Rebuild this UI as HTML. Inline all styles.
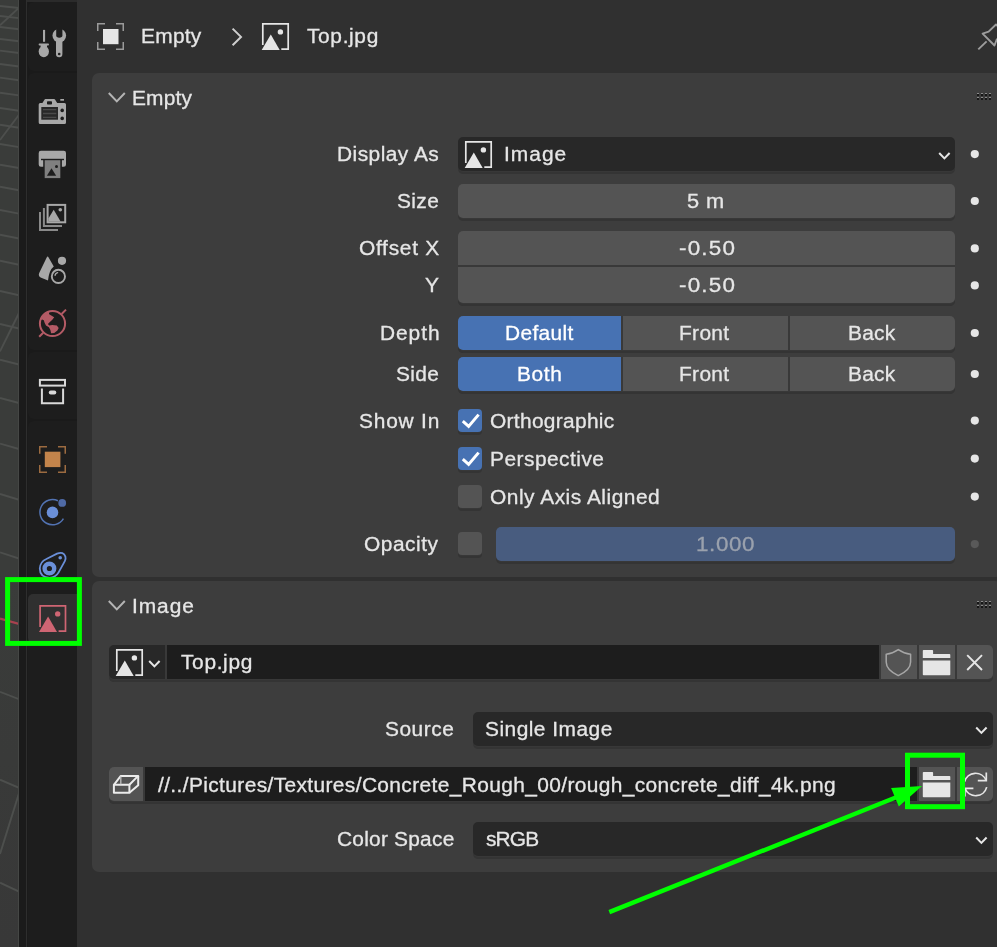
<!DOCTYPE html>
<html lang="en">
<head>
<meta charset="utf-8">
<title>Blender Properties - Image Empty</title>
<style>
*{box-sizing:border-box;margin:0;padding:0}
html,body{width:997px;height:947px;overflow:hidden;background:#303030}
body{position:relative;font-family:"Liberation Sans",sans-serif;font-size:20px;color:#e6e6e6;line-height:24px}
.abs{position:absolute}
.t{position:absolute;white-space:nowrap;height:24px;line-height:24px;will-change:transform;transform-origin:0 50%;-webkit-text-stroke:0.3px currentColor}
.panel{position:absolute;left:92px;width:910px;background:#3d3d3d;border-radius:7px}
.fld{position:absolute;height:34px;border-radius:5px;box-shadow:0 1px 0 #383838,0 3px 0 #343434}
.rsh{position:absolute;height:34px;border-radius:5px;background:#393939;box-shadow:0 1px 0 #383838,0 3px 0 #343434}
.num{background:#545454}
.menu{background:#282828}
.txt{background:#1d1d1d}
.sel{background:#4772b3}
.cb{position:absolute;left:458px;width:24px;height:23px;border-radius:4px;background:#545454;box-shadow:0 1px 0 #383838,0 3px 0 #343434}
.cb.on{background:#4772b3}
svg{position:absolute;overflow:visible}
.grp{left:28px;width:49px;background:#1d1d1d;border-radius:6px 0 0 6px}
</style>
</head>
<body>

<!-- viewport strip -->
<div class="abs" id="vp" style="left:0;top:0;width:19px;height:947px;background:linear-gradient(#3a3c3a,#3a3c3a 60%,#383838)"></div>
<svg width="19" height="947" style="left:0;top:0;overflow:hidden" stroke="#4d4f4d" stroke-width="1.9" fill="none">
<line x1="0" y1="6.0" x2="19" y2="8.0"/><line x1="0" y1="16.0" x2="19" y2="18.1"/><line x1="0" y1="27.0" x2="19" y2="29.2"/><line x1="0" y1="39.0" x2="19" y2="41.3"/><line x1="0" y1="50.6" x2="19" y2="53.0"/><line x1="0" y1="64.0" x2="19" y2="66.5"/><line x1="0" y1="77.6" x2="19" y2="80.2"/><line x1="0" y1="92.7" x2="19" y2="95.4"/><line x1="0" y1="108.0" x2="19" y2="110.8"/><line x1="0" y1="124.8" x2="19" y2="127.8"/><line x1="0" y1="144.0" x2="19" y2="147.1"/><line x1="0" y1="164.7" x2="19" y2="168.0"/><line x1="0" y1="186.7" x2="19" y2="190.2"/><line x1="0" y1="210.0" x2="19" y2="213.6"/><line x1="0" y1="234.7" x2="19" y2="238.5"/><line x1="0" y1="260.8" x2="19" y2="264.8"/><line x1="0" y1="291.0" x2="19" y2="295.3"/><line x1="0" y1="324.0" x2="19" y2="328.5"/><line x1="0" y1="359.7" x2="19" y2="364.5"/><line x1="0" y1="398.0" x2="19" y2="403.1"/><line x1="0" y1="443.6" x2="19" y2="449.1"/><line x1="0" y1="494.0" x2="19" y2="499.8"/><line x1="0" y1="552.3" x2="19" y2="558.6"/><line x1="0" y1="691.8" x2="19" y2="699.2"/><line x1="0" y1="779.7" x2="19" y2="787.8"/><line x1="0" y1="882.7" x2="19" y2="891.6"/>
<line x1="0" y1="25.3" x2="19" y2="7.6"/><line x1="0" y1="140" x2="19" y2="114.7"/><line x1="0" y1="351.4" x2="19" y2="313"/><line x1="0" y1="854" x2="19" y2="793.3"/>
<line x1="0" y1="618.5" x2="19" y2="624" stroke="#a8414f" stroke-width="2.3"/>
</svg>
<div class="abs" style="left:18px;top:0;width:1px;height:947px;background:#454745"></div>
<div class="abs" style="left:19px;top:0;width:9px;height:947px;background:#1b1b1b"></div>
<div class="abs" style="left:26px;top:0;width:1px;height:947px;background:#2e2e2e"></div>
<!-- tab sidebar -->
<div class="abs" id="side" style="left:28px;top:0;width:49px;height:947px;background:#1a1a1a"></div>
<div class="abs" style="left:27px;top:0;width:50px;height:2px;background:#2b2b2b"></div>
<div class="abs grp" style="top:2px;height:69px"></div>
<div class="abs grp" style="top:73px;height:277px"></div>
<div class="abs grp" style="top:352px;height:67px"></div>
<div class="abs grp" style="top:421px;height:526px;border-radius:6px 0 0 0"></div>
<div class="abs" style="left:28px;top:594px;width:49px;height:49px;background:#303030;border-radius:5px 0 0 5px"></div>

<!-- header -->

<!-- panel Empty -->
<div class="panel" style="top:73px;height:504px"></div>
<div class="rsh" style="left:458px;top:231px;width:497px;height:72px"></div>
<div class="rsh" style="left:458px;top:316px;width:497px"></div>
<div class="rsh" style="left:458px;top:357px;width:497px"></div>

<div class="fld menu" style="left:458px;top:137px;width:497px"></div>

<div class="fld num" style="left:458px;top:184px;width:497px"></div>

<div class="fld num" style="left:458px;top:231px;width:497px;height:34px;border-radius:5px 5px 0 0;box-shadow:none"></div>
<div class="fld num" style="left:458px;top:267px;width:497px;height:36px;border-radius:0 0 5px 5px"></div>

<div class="fld sel" style="left:458px;top:316px;width:163px;border-radius:5px 0 0 5px"></div>
<div class="fld num" style="left:623px;top:316px;width:165px;border-radius:0"></div>
<div class="fld num" style="left:790px;top:316px;width:165px;border-radius:0 5px 5px 0"></div>

<div class="fld sel" style="left:458px;top:357px;width:163px;border-radius:5px 0 0 5px"></div>
<div class="fld num" style="left:623px;top:357px;width:165px;border-radius:0"></div>
<div class="fld num" style="left:790px;top:357px;width:165px;border-radius:0 5px 5px 0"></div>

<div class="cb on" style="top:409px"></div>
<div class="cb on" style="top:447px"></div>
<div class="cb" style="top:485px"></div>

<div class="cb" style="top:532px"></div>
<div class="fld" style="left:496px;top:527px;width:459px;background:#485c7f;color:#8f98a8"></div>

<!-- panel Image -->
<div class="panel" style="top:581px;height:291px"></div>
<div class="rsh" style="left:109px;top:645px;width:884px"></div>
<div class="rsh" style="left:109px;top:767px;width:884px"></div>

<div class="fld num" style="left:109px;top:645px;width:56px;border-radius:5px 0 0 5px;background:#282828"></div>
<div class="fld txt" style="left:167px;top:645px;width:712px;border-radius:0"></div>
<div class="fld num" style="left:881px;top:645px;width:36px;border-radius:0"></div>
<div class="fld num" style="left:919px;top:645px;width:36px;border-radius:0"></div>
<div class="fld num" style="left:957px;top:645px;width:36px;border-radius:0 5px 5px 0"></div>

<div class="fld menu" style="left:473px;top:712px;width:520px"></div>

<div class="fld num" style="left:109px;top:767px;width:34px;border-radius:5px 0 0 5px"></div>
<div class="fld txt" style="left:145px;top:767px;width:772px;border-radius:0"></div>
<div class="fld num" style="left:919px;top:767px;width:36px;border-radius:0"></div>
<div class="fld num" style="left:957px;top:767px;width:36px;border-radius:0 5px 5px 0"></div>

<div class="fld menu" style="left:473px;top:822px;width:520px"></div>

<!-- TEXT-START -->
<div class="t" id="h_empty" style="left:140.76px;top:24px;letter-spacing:0.253px;transform:scaleX(1.045)">Empty</div>
<div class="t" id="h_top" style="left:307.19px;top:24px;letter-spacing:0.615px;transform:scaleX(1.045)">Top.jpg</div>
<div class="t" id="p_empty" style="left:132.02px;top:86px;letter-spacing:0.163px;transform:scaleX(1.045)">Empty</div>
<div class="t" id="l_display" style="left:337.11px;top:142px;letter-spacing:0.442px;transform:scaleX(1.045)">Display As</div>
<div class="t" id="v_image" style="left:503.55px;top:142px;letter-spacing:0.993px;transform:scaleX(1.045)">Image</div>
<div class="t" id="l_size" style="left:397.20px;top:189px;letter-spacing:0.355px;transform:scaleX(1.045)">Size</div>
<div class="t" id="v_size" style="left:687.11px;top:189px;letter-spacing:0.372px;transform:scaleX(1.09)">5 m</div>
<div class="t" id="l_offx" style="left:358.85px;top:236px;letter-spacing:0.684px;transform:scaleX(1.045)">Offset X</div>
<div class="t" id="v_offx" style="left:679.35px;top:236px;letter-spacing:1.084px;transform:scaleX(1.12)">-0.50</div>
<div class="t" id="l_y" style="left:424.65px;top:273px;letter-spacing:0.400px;transform:scaleX(1.045)">Y</div>
<div class="t" id="v_y" style="left:679.35px;top:273px;letter-spacing:1.084px;transform:scaleX(1.12)">-0.50</div>
<div class="t" id="l_depth" style="left:379.81px;top:321px;letter-spacing:0.898px;transform:scaleX(1.045)">Depth</div>
<div class="t" id="v_default" style="left:504.72px;top:321px;letter-spacing:0.328px;transform:scaleX(1.045);color:#ffffff">Default</div>
<div class="t" id="v_front1" style="left:678.82px;top:321px;letter-spacing:0.320px;transform:scaleX(1.045)">Front</div>
<div class="t" id="v_back1" style="left:847.96px;top:321px;letter-spacing:0.202px;transform:scaleX(1.045)">Back</div>
<div class="t" id="l_side" style="left:396.20px;top:362px;letter-spacing:0.313px;transform:scaleX(1.045)">Side</div>
<div class="t" id="v_both" style="left:516.91px;top:362px;letter-spacing:0.588px;transform:scaleX(1.045);color:#ffffff">Both</div>
<div class="t" id="v_front2" style="left:678.82px;top:362px;letter-spacing:0.320px;transform:scaleX(1.045)">Front</div>
<div class="t" id="v_back2" style="left:847.96px;top:362px;letter-spacing:0.202px;transform:scaleX(1.045)">Back</div>
<div class="t" id="l_showin" style="left:358.76px;top:409px;letter-spacing:0.769px;transform:scaleX(1.045)">Show In</div>
<div class="t" id="c_ortho" style="left:490.35px;top:409px;letter-spacing:0.297px;transform:scaleX(1.045)">Orthographic</div>
<div class="t" id="c_persp" style="left:489.91px;top:447px;letter-spacing:0.456px;transform:scaleX(1.045)">Perspective</div>
<div class="t" id="c_axis" style="left:490.35px;top:485px;letter-spacing:0.491px;transform:scaleX(1.045)">Only Axis Aligned</div>
<div class="t" id="l_opacity" style="left:364.25px;top:532px;letter-spacing:0.510px;transform:scaleX(1.045)">Opacity</div>
<div class="t" id="v_opacity" style="left:696.07px;top:532px;letter-spacing:0.550px;transform:scaleX(1.12);color:#9aa1ad">1.000</div>
<div class="t" id="p_image" style="left:131.53px;top:594px;letter-spacing:0.897px;transform:scaleX(1.045)">Image</div>
<div class="t" id="v_top" style="left:180.87px;top:650px;letter-spacing:0.625px;transform:scaleX(1.045)">Top.jpg</div>
<div class="t" id="l_source" style="left:384.75px;top:717px;letter-spacing:0.487px;transform:scaleX(1.045)">Source</div>
<div class="t" id="v_single" style="left:484.92px;top:717px;letter-spacing:0.459px;transform:scaleX(1.045)">Single Image</div>
<div class="t" id="v_path" style="left:158.24px;top:773px;letter-spacing:0.364px;transform:scaleX(1.045)">//../Pictures/Textures/Concrete_Rough_00/rough_concrete_diff_4k.png</div>
<div class="t" id="l_cs" style="left:337.13px;top:827px;letter-spacing:0.216px;transform:scaleX(1.045)">Color Space</div>
<div class="t" id="v_srgb" style="left:486.10px;top:827px;letter-spacing:-0.800px;transform:scaleX(1.045)">sRGB</div>
<!-- TEXT-END -->

<!-- icons -->
<svg id="icons" width="997" height="947" style="left:0;top:0">
<defs>
<symbol id="img" viewBox="0 0 27 27" overflow="visible">
<path d="M0.8 22 V0.8 H26.2 V26.2 H19.3" fill="none" stroke="currentColor" stroke-width="1.7"/>
<path d="M8.8 11.4 L17.7 27 H-0.3 Z" fill="currentColor"/>
<circle cx="18.4" cy="8.9" r="2.7" fill="currentColor"/>
</symbol>
<symbol id="folder" viewBox="0 0 28 26" overflow="visible">
<path d="M0.8 0 H9.5 Q10.3 0 10.3 0.8 V4 H26.7 Q27.5 4 27.5 4.8 V8 H0 V0.8 Q0 0 0.8 0 Z" fill="currentColor"/>
<path d="M0 10.4 H27.5 V24.4 Q27.5 25.2 26.7 25.2 H0.8 Q0 25.2 0 24.4 Z" fill="currentColor"/>
</symbol>
<symbol id="chev" viewBox="0 0 12 8" overflow="visible">
<path d="M0.8 1 L6 6.4 L11.2 1" fill="none" stroke="currentColor" stroke-width="2" stroke-linecap="butt" stroke-linejoin="miter"/>
</symbol>
<clipPath id="wclip"><circle cx="52.5" cy="323.5" r="12.6"/></clipPath>
</defs>

<!-- sidebar tab icons -->
<g id="tab-tool" fill="#a8a8a8">
<rect x="43" y="29.9" width="2.1" height="11.9"/>
<rect x="38.7" y="43.4" width="10.2" height="2" rx="0.7"/>
<rect x="40.6" y="45" width="6.4" height="2"/>
<ellipse cx="43.8" cy="51.5" rx="5.15" ry="5.7"/>
<circle cx="59.3" cy="35.6" r="6.8"/>
<path d="M56.2 27 V35.6 Q56.2 37.7 59.3 37.7 Q62.4 37.7 62.4 35.6 V27 Z" fill="#1d1d1d"/>
<path d="M52 26 H67 V30.2 L62 29 H56.6 L52 30.2 Z" fill="#1d1d1d"/>
<path d="M56 39.6 H62.4 V54 Q62.4 57.2 59.2 57.2 Q56 57.2 56 54 Z"/>
<circle cx="59.2" cy="54" r="1.3" fill="#1d1d1d"/>
</g>
<g id="tab-render">
<path d="M40.2 102.9 H42.4 L44.6 99.4 Q44.9 99 45.4 99 H54.2 Q54.7 99 55 99.4 L57.2 102.9 H64.5 Q66 102.9 66 104.4 V122.6 Q66 124.1 64.5 124.1 H40.2 Q38.7 124.1 38.7 122.6 V104.4 Q38.7 102.9 40.2 102.9 Z" fill="#a8a8a8"/>
<rect x="60.3" y="99" width="3.7" height="1.7" fill="#a8a8a8"/>
<rect x="47" y="101.3" width="5" height="3.2" rx="0.8" fill="#1d1d1d"/>
<rect x="41.3" y="107" width="16.7" height="12.7" fill="#282828"/>
<g stroke="#4a4a4a" stroke-width="1.3"><path d="M43 109.6 H56.3 M43 113.5 H56.3 M43 117.4 H56.3"/></g>
<circle cx="62.2" cy="110.4" r="1.8" fill="#1d1d1d"/><circle cx="62.2" cy="118.4" r="1.8" fill="#1d1d1d"/>
</g>
<g id="tab-output">
<path d="M40.9 150.8 H63.8 Q66 150.8 66 153 V164.4 Q66 166.7 63.7 166.7 H61.9 V159.4 H43.2 V166.7 H41 Q38.7 166.7 38.7 164.4 V153 Q38.7 150.8 40.9 150.8 Z" fill="#a8a8a8"/>
<rect x="41" y="158.8" width="23" height="1.4" fill="#1d1d1d"/>
<rect x="44.7" y="160.2" width="15.6" height="17.9" fill="#808080"/>
<path d="M51.5 168.2 L56.2 175.7 H46.9 Z" fill="#1d1d1d"/>
<circle cx="56.5" cy="166.4" r="1.5" fill="#1d1d1d"/>
</g>
<g id="tab-viewlayer">
<rect x="47.6" y="204.9" width="17.6" height="17.4" fill="none" stroke="#a8a8a8" stroke-width="2"/>
<path d="M53.7 209.8 L60.6 221.5 H48.4 V218.6 Z" fill="#a8a8a8"/>
<circle cx="60.3" cy="209.8" r="1.8" fill="#a8a8a8"/>
<path d="M43.9 208 V226.1 H62" fill="none" stroke="#8a8a8a" stroke-width="2"/>
<path d="M40 212 V230 H58" fill="none" stroke="#8a8a8a" stroke-width="2"/>
</g>
<g id="tab-scene">
<path d="M46.7 257.4 Q47.6 255.6 48.6 257.4 L53.8 266.6 Q49.2 270 48 280.6 L41.2 277.8 Q37.8 276.2 39.2 273 Z" fill="#a8a8a8"/>
<circle cx="58.4" cy="276.4" r="9" fill="#1d1d1d"/>
<circle cx="58.4" cy="276.4" r="6.6" fill="none" stroke="#a8a8a8" stroke-width="1.9"/>
<path d="M55 275.2 Q55.6 273.2 57.6 272.6" fill="none" stroke="#a8a8a8" stroke-width="1.4" stroke-linecap="round"/>
<circle cx="62" cy="260.8" r="4.1" fill="#a8a8a8"/>
</g>
<g id="tab-world" stroke="#b45b66" fill="none">
<circle cx="52.5" cy="323.5" r="12.6" stroke-width="2"/>
<path d="M39.2 336.8 L43.2 332.8 M61.6 314 L66 309.6" stroke-width="2"/>
<path clip-path="url(#wclip)" d="M39 320.5 L40 314 L45 310 L49.6 310.6 L48.9 314 L50.8 315.3 L54.2 317.2 L52.3 319.7 L50.4 321.6 L48.9 322.9 L47.9 324.1 L49.2 325.4 L52.3 325.1 L56.8 325.4 L58.7 328 L57.4 330.5 L54.2 333 L51.1 333.3 L50.4 329.9 L48.9 327.3 L46 325.4 L44.7 322.9 L43.8 320.3 L42.2 319.6 Z" fill="#b45b66" stroke="none"/>
</g>
<g id="tab-collection" fill="none" stroke="#d9d9d9" stroke-width="2">
<rect x="39.9" y="379.9" width="25.1" height="5.7"/>
<path d="M41.9 388.4 V403.3 H63.1 V388.4"/>
<rect x="48.8" y="390.6" width="7.5" height="3.9" rx="1.95" fill="#d9d9d9" stroke="none"/>
</g>
<g id="tab-object">
<g fill="none" stroke="#9c6b40" stroke-width="1.5">
<path d="M39.75 453.8 V446.75 H47"/><path d="M58 446.75 H65.25 V453.8"/><path d="M65.25 465 V472.25 H58"/><path d="M47 472.25 H39.75 V465"/>
</g>
<rect x="44.8" y="451.7" width="15.6" height="15.4" fill="#c3844b"/>
</g>
<g id="tab-physics">
<circle cx="52.5" cy="512.4" r="5.8" fill="#6a8fd8"/>
<path d="M57.9 500.8 A12.6 12.6 0 1 0 63.4 518.6" fill="none" stroke="#5273b3" stroke-width="1.5"/>
<circle cx="62.2" cy="502.9" r="3.9" fill="#4f6aa6"/>
</g>
<g id="tab-constraint">
<circle cx="49.4" cy="568.5" r="4.8" fill="none" stroke="#6a8fd8" stroke-width="4.4"/>
<path d="M57 553.6 Q63.6 551 65.4 556.6 Q66 558.6 64.8 561.2 L58.6 572.4 Q55.6 577.6 49.6 577.8 Q39.8 577.4 39.8 568.6 Q39.9 562 46.4 559 Z" fill="none" stroke="#6a8fd8" stroke-width="1.8"/>
<circle cx="60.2" cy="557.7" r="1.8" fill="#6a8fd8"/>
</g>
<use href="#img" x="39.3" y="605" width="27" height="27" color="#cf6573"/>
<!-- header: object icon -->
<g fill="none" stroke="#9a9a9a" stroke-width="1.5">
<path d="M97.75 31 V23.75 H105"/><path d="M116 23.75 H123.25 V31"/><path d="M123.25 42 V49.25 H116"/><path d="M105 49.25 H97.75 V42"/>
</g>
<rect x="103" y="29" width="15.5" height="15.2" fill="#e6e6e6"/>
<path d="M232.6 28.6 L241 36.9 L232.6 45.2" fill="none" stroke="#cfcfcf" stroke-width="2"/>
<use href="#img" x="262" y="23" width="27" height="27" color="#e6e6e6"/>
<!-- pin -->
<g fill="none" stroke="#9d9d9d" stroke-width="1.9" stroke-linejoin="round">
<path d="M978.3 49.4 L986.6 41.4"/>
<path d="M982.6 33.6 L988.6 31.6 L996 24.5 L1004 32 L996.5 40 L994.5 45.5 Z"/>
</g>

<!-- panel header chevrons + grips -->
<path d="M108.8 93 L116.8 101.4 L124.8 93" fill="none" stroke="#b4b4b4" stroke-width="2"/>
<path d="M108.8 601 L116.8 609.4 L124.8 601" fill="none" stroke="#b4b4b4" stroke-width="2"/>
<g id="grip1">
<g fill="#8a8a8a"><rect x="977" y="93" width="2" height="1"/><rect x="981" y="93" width="2" height="1"/><rect x="985" y="93" width="2" height="1"/><rect x="989" y="93" width="2" height="1"/><rect x="977" y="97" width="2" height="1"/><rect x="981" y="97" width="2" height="1"/><rect x="985" y="97" width="2" height="1"/><rect x="989" y="97" width="2" height="1"/></g>
<g fill="#161616"><rect x="977" y="94" width="2" height="2"/><rect x="981" y="94" width="2" height="2"/><rect x="985" y="94" width="2" height="2"/><rect x="989" y="94" width="2" height="2"/><rect x="977" y="98" width="2" height="2"/><rect x="981" y="98" width="2" height="2"/><rect x="985" y="98" width="2" height="2"/><rect x="989" y="98" width="2" height="2"/></g>
</g>
<use href="#grip1" y="508"/>

<!-- animate dots -->
<g fill="#e6e6e6"><circle cx="974.8" cy="154.1" r="4.1"/><circle cx="974.8" cy="201" r="4.1"/><circle cx="974.8" cy="248.4" r="4.1"/><circle cx="974.8" cy="285.4" r="4.1"/><circle cx="974.8" cy="333" r="4.1"/><circle cx="974.8" cy="374" r="4.1"/><circle cx="974.8" cy="420.6" r="4.1"/><circle cx="974.8" cy="458.6" r="4.1"/><circle cx="974.8" cy="496.6" r="4.1"/></g>
<circle cx="974.8" cy="544.1" r="4.1" fill="#595959"/>
<!-- dropdown icons -->
<use href="#img" x="465" y="141" width="27" height="27" color="#e6e6e6"/>
<use href="#chev" x="938.4" y="152" width="12" height="8" color="#e6e6e6"/>
<use href="#chev" x="975.4" y="726.5" width="12" height="8" color="#e6e6e6"/>
<use href="#chev" x="975.4" y="836.5" width="12" height="8" color="#e6e6e6"/>

<!-- checkmarks -->
<path d="M462.8 421.2 L468.6 426.4 L478.6 414.6" fill="none" stroke="#ffffff" stroke-width="3"/>
<path d="M462.8 459.2 L468.6 464.4 L478.6 452.6" fill="none" stroke="#ffffff" stroke-width="3"/>

<!-- ID row -->
<use href="#img" x="116" y="649" width="27" height="27" color="#e6e6e6"/>
<use href="#chev" x="148.4" y="660" width="12" height="8" color="#e6e6e6"/>
<path d="M898.3 649.6 Q904 653.6 910.6 654.2 V662 Q910.6 670 898.3 675.6 Q886.2 670 886.2 662 V654.2 Q892.6 653.6 898.3 649.6 Z" fill="none" stroke="#a6a6a6" stroke-width="1.5" stroke-linejoin="round"/>
<use href="#folder" x="922.8" y="650" width="28" height="26" color="#e6e6e6"/>
<path d="M967.2 655.2 L982 670 M982 655.2 L967.2 670" fill="none" stroke="#e6e6e6" stroke-width="1.9"/>

<!-- filepath row -->
<g fill="none" stroke="#ececec" stroke-width="2" stroke-linejoin="round">
<path d="M113.9 784.8 H129.4 V792.8 H113.9 Z"/>
<path d="M113.9 784.8 L120.8 775.9 H138.2 L129.4 784.8"/>
<path d="M138.2 775.9 V785.2 L129.4 792.8"/>
</g>
<path d="M120.8 776.5 V784.3" fill="none" stroke="#b8b8b8" stroke-width="1.4"/>
<use href="#folder" x="922.8" y="772" width="28" height="26" color="#e6e6e6"/>
<g fill="none" stroke="#e6e6e6" stroke-width="1.7">
<path d="M964.5 781.9 A11.4 11.4 0 0 1 986.2 780.6"/>
<path d="M977.8 780.7 H986.3 V772.4"/>
<path d="M986.7 787.1 A11.4 11.4 0 0 1 965 788.4"/>
<path d="M973.4 788.3 H964.9 V796.6"/>
</g>
</svg>

<!-- annotations -->
<svg id="anno" width="997" height="947" style="left:0;top:0">
<rect x="7.6" y="579.6" width="71.8" height="63.8" fill="none" stroke="#00ff00" stroke-width="5"/>
<rect x="907.5" y="755.2" width="55" height="51.5" fill="none" stroke="#00ff00" stroke-width="5"/>
<line x1="609.3" y1="912.1" x2="900" y2="795.8" stroke="#00ff00" stroke-width="4.4"/>
<polygon points="922,786.1 891.1,788 898.8,806.6" fill="#00ff00"/>
</svg>

</body>
</html>
